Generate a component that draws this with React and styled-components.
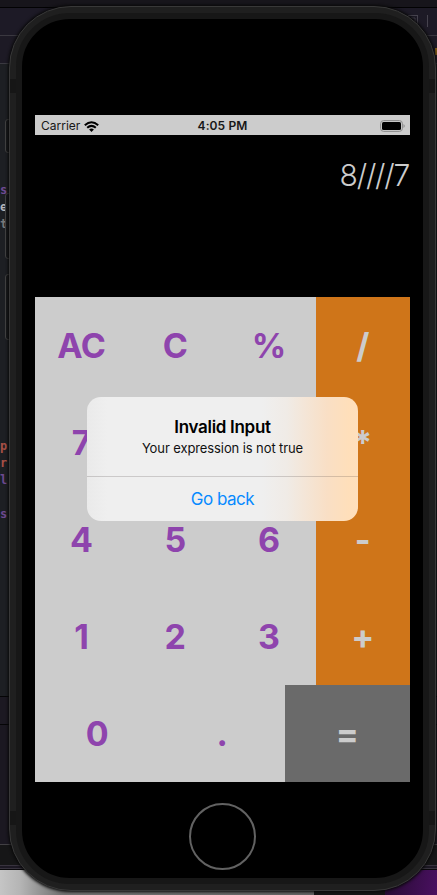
import React from 'react';
import styled, { createGlobalStyle } from 'styled-components';

const GlobalStyle = createGlobalStyle`
  * { box-sizing: border-box; }
  body { margin: 0; background: #1d1e22; font-family: Inter, "Liberation Sans", sans-serif; }
`;

const Desktop = styled.main`
  position: relative;
  width: 437px;
  height: 895px;
  overflow: hidden;
  padding: 6px 0 0 9px;
`;

const EditorWindow = styled.div`
  position: absolute;
  inset: 0;
  background: linear-gradient(
    to bottom,
    #17151b 0 7px, #020203 7px 8px, #1d1a26 8px 35px, #3a3840 35px 36px,
    #1d1a25 36px 63px, #3a3940 63px 64px, #1d1f23 64px 696px,
    #050506 696px 697px, #1c1922 697px 724px, #050506 724px 725px,
    #1b1821 725px 844px, #424044 844px 845px, #161617 845px 865px,
    #38333e 865px 866px, #1c1823 866px 868px, #38333e 868px 869px, #0a090b 869px
  );
`;

const Wallpaper = styled.div`
  position: absolute;
  left: 0;
  right: 0;
  top: 870px;
  bottom: 0;
  display: grid;
  grid-template-columns: 314px 71px 1fr;
`;

const Sheet = styled.div`
  background: linear-gradient(to right, #c5c5c5, #b5b5b5 20px, #747474 60px, #656565);
`;

const DarkPane = styled.div`
  background: #161616;
`;

const PurplePane = styled.div`
  background: linear-gradient(100deg, #250b31, #4a1061);
`;

const CodeFragment = styled.span`
  position: absolute;
  left: 0;
  top: ${({ $y }) => $y}px;
  width: 8px;
  overflow: hidden;
  color: ${({ $color }) => $color};
  font: 700 12px/17px "DejaVu Sans Mono", monospace;
`;

const ToolbarIcon = styled.svg`
  position: absolute;
  left: 408px;
  top: 14px;
`;

const WarningMark = styled.div`
  position: absolute;
  left: 435px;
  top: 48px;
  width: 2px;
  height: 7px;
  background: #805c17;
`;

const SideButton = styled.div`
  position: absolute;
  left: 5px;
  top: ${({ $y }) => $y}px;
  width: 8px;
  height: ${({ $h }) => $h}px;
  border: 1px solid #424242;
  border-radius: 3px;
  background: #18191b;
`;

const Phone = styled.section`
  position: relative;
  width: 427px;
  height: 885px;
  border: 1px solid #383838;
  border-radius: 62px;
  background: #1f1f1f;
  padding: 6px;
  box-shadow: 0 0 3px 1px #080808;
`;

const AntennaBand = styled.div`
  position: absolute;
  top: ${({ $y }) => $y}px;
  left: 0;
  right: 0;
  height: 14px;
  background: #161616;
`;

const Bezel = styled.div`
  position: relative;
  height: 871px;
  border: 6px solid #171717;
  border-radius: 54px;
  background: #000;
  padding: 96px 13px 0;
`;

const Screen = styled.div`
  position: relative;
  width: 375px;
  height: 667px;
  display: flex;
  flex-direction: column;
`;

const StatusBar = styled.header`
  height: 20px;
  display: grid;
  grid-template-columns: 1fr auto 1fr;
  align-items: center;
  padding: 0 5px 0 6px;
  background: #ccc;
  color: #171717;
  font-size: 12px;
  line-height: 20px;
`;

const Carrier = styled.div`
  display: flex;
  align-items: center;
  gap: 4px;
  padding-top: 1px;
`;

const Clock = styled.time`
  font-weight: 600;
  letter-spacing: 0.1px;
  padding: 1px 1px 0 0;
`;

const BatteryIcon = styled.svg`
  justify-self: end;
`;

const Display = styled.output`
  height: 162px;
  padding: 21px 1px 0 0;
  text-align: right;
  color: #ccc;
  font-size: 30px;
  font-weight: 300;
  line-height: 38px;
  letter-spacing: -1.25px;
`;

const Keypad = styled.div`
  flex: 1;
  display: grid;
  grid-template-rows: repeat(5, 97px);
`;

const KeyRow = styled.div`
  display: grid;
  grid-template-columns: repeat(${({ $count }) => $count}, 1fr);
`;

const keyTones = {
  number: { background: '#ccc', color: '#8e44ad' },
  operator: { background: '#cf7519', color: '#ccc' },
  equals: { background: '#6a6a6a', color: '#ccc' },
};

const Key = styled.button`
  border: 0;
  padding: 1px 1px 0 0;
  background: ${({ $tone }) => keyTones[$tone].background};
  color: ${({ $tone }) => keyTones[$tone].color};
  font: 700 34px/96px Inter, "Liberation Sans", sans-serif;
  letter-spacing: -0.4px;
  font-feature-settings: "calt" 0;
`;

const Alert = styled.div`
  position: absolute;
  left: 52px;
  top: 282px;
  width: 271px;
  height: 124px;
  border-radius: 14px;
  overflow: hidden;
  display: grid;
  grid-template-rows: 79px 1fr;
  text-align: center;
  background: linear-gradient(to right, #eaeaea, #efefef 20px, #efefef 175px, #f0ebe6 200px, #f9dfc5 240px, #ffdfba 262px, #fedfbd);
`;

const AlertCopy = styled.div`
  padding-top: 19px;
`;

const AlertTitle = styled.h1`
  margin: 0;
  font-size: 17px;
  font-weight: 600;
  line-height: 22px;
  letter-spacing: -0.3px;
  color: #000;
`;

const AlertMessage = styled.p`
  margin: 1px 0 0;
  font-size: 13px;
  line-height: 18px;
  letter-spacing: -0.1px;
  color: #111;
`;

const AlertAction = styled.button`
  border: 0;
  border-top: 1px solid rgba(60, 50, 50, 0.2);
  padding: 0;
  background: transparent;
  color: #078aff;
  font: 400 17px/44px Inter, "Liberation Sans", sans-serif;
  letter-spacing: -0.5px;
`;

const HomeButton = styled.div`
  width: 67px;
  height: 67px;
  margin: 21px auto 0;
  border: 2px solid #626262;
  border-radius: 50%;
`;

const rows = [
  ['AC', 'C', '%', '/'],
  ['7', '8', '9', '*'],
  ['4', '5', '6', '-'],
  ['1', '2', '3', '+'],
  ['0', '.', '='],
];

// Keys that lie fully beneath the open alert.
const coveredKeys = ['8', '9'];

const code = [
  [182, '#6f4b94', 's'], [199, '#b5b5b8', 'e'], [216, '#777779', 't'],
  [438, '#a85046', 'p'], [455, '#a85046', 'r'], [472, '#6d498f', 'l'],
  [506, '#6d498f', 's'],
];

function toneOf(label) {
  if (label === '=') return 'equals';
  return '/*-+'.includes(label) ? 'operator' : 'number';
}

function WifiIcon() {
  return (
    <svg width="15" height="11" viewBox="0 0 15 11" fill="none" stroke="#000" strokeWidth="2">
      <path d="M.8 4.3Q7.5-1.8 14.2 4.3" />
      <path d="M3.2 6.8Q7.5 3 11.8 6.8" />
      <path d="M5.1 8.6Q7.5 6.6 9.9 8.6L7.5 11Z" fill="#000" stroke="none" />
    </svg>
  );
}

export default function App() {
  return (
    <>
      <GlobalStyle />
      <Desktop>
        <EditorWindow />
        <Wallpaper><Sheet /><DarkPane /><PurplePane /></Wallpaper>
        {code.map(([y, color, text]) => (
          <CodeFragment key={y} $y={y} $color={color}>{text}</CodeFragment>
        ))}
        <ToolbarIcon width="24" height="14" fill="none" stroke="#46434e">
          <rect x=".5" y="1.5" width="9" height="9" /><path d="M3 4h4v4M19.5 1v12" />
        </ToolbarIcon>
        <WarningMark />
        <SideButton $y={119} $h={34} />
        <SideButton $y={193} $h={66} />
        <SideButton $y={274} $h={66} />
        <Phone>
          <AntennaBand $y={72} />
          <AntennaBand $y={804} />
          <Bezel>
            <Screen>
              <StatusBar>
                <Carrier>Carrier <WifiIcon /></Carrier>
                <Clock>4:05 PM</Clock>
                <BatteryIcon width="25" height="12" viewBox="0 0 25 12">
                  <rect x=".6" y=".6" width="21.8" height="10.8" rx="3" fill="none" stroke="#8b8b8b" />
                  <rect x="2" y="2" width="19" height="8" rx="1.5" fill="#000" />
                  <path d="M23.5 4Q26 6 23.5 8Z" fill="#8b8b8b" />
                </BatteryIcon>
              </StatusBar>
              <Display>8////7</Display>
              <Keypad>
                {rows.map((row) => (
                  <KeyRow key={row[0]} $count={row.length}>
                    {row.map((label) => (
                      <Key key={label} $tone={toneOf(label)} aria-label={label}>
                        {coveredKeys.includes(label) ? null : label}
                      </Key>
                    ))}
                  </KeyRow>
                ))}
              </Keypad>
              <Alert role="alertdialog">
                <AlertCopy>
                  <AlertTitle>Invalid Input</AlertTitle>
                  <AlertMessage>Your expression is not true</AlertMessage>
                </AlertCopy>
                <AlertAction>Go back</AlertAction>
              </Alert>
            </Screen>
            <HomeButton />
          </Bezel>
        </Phone>
      </Desktop>
    </>
  );
}
